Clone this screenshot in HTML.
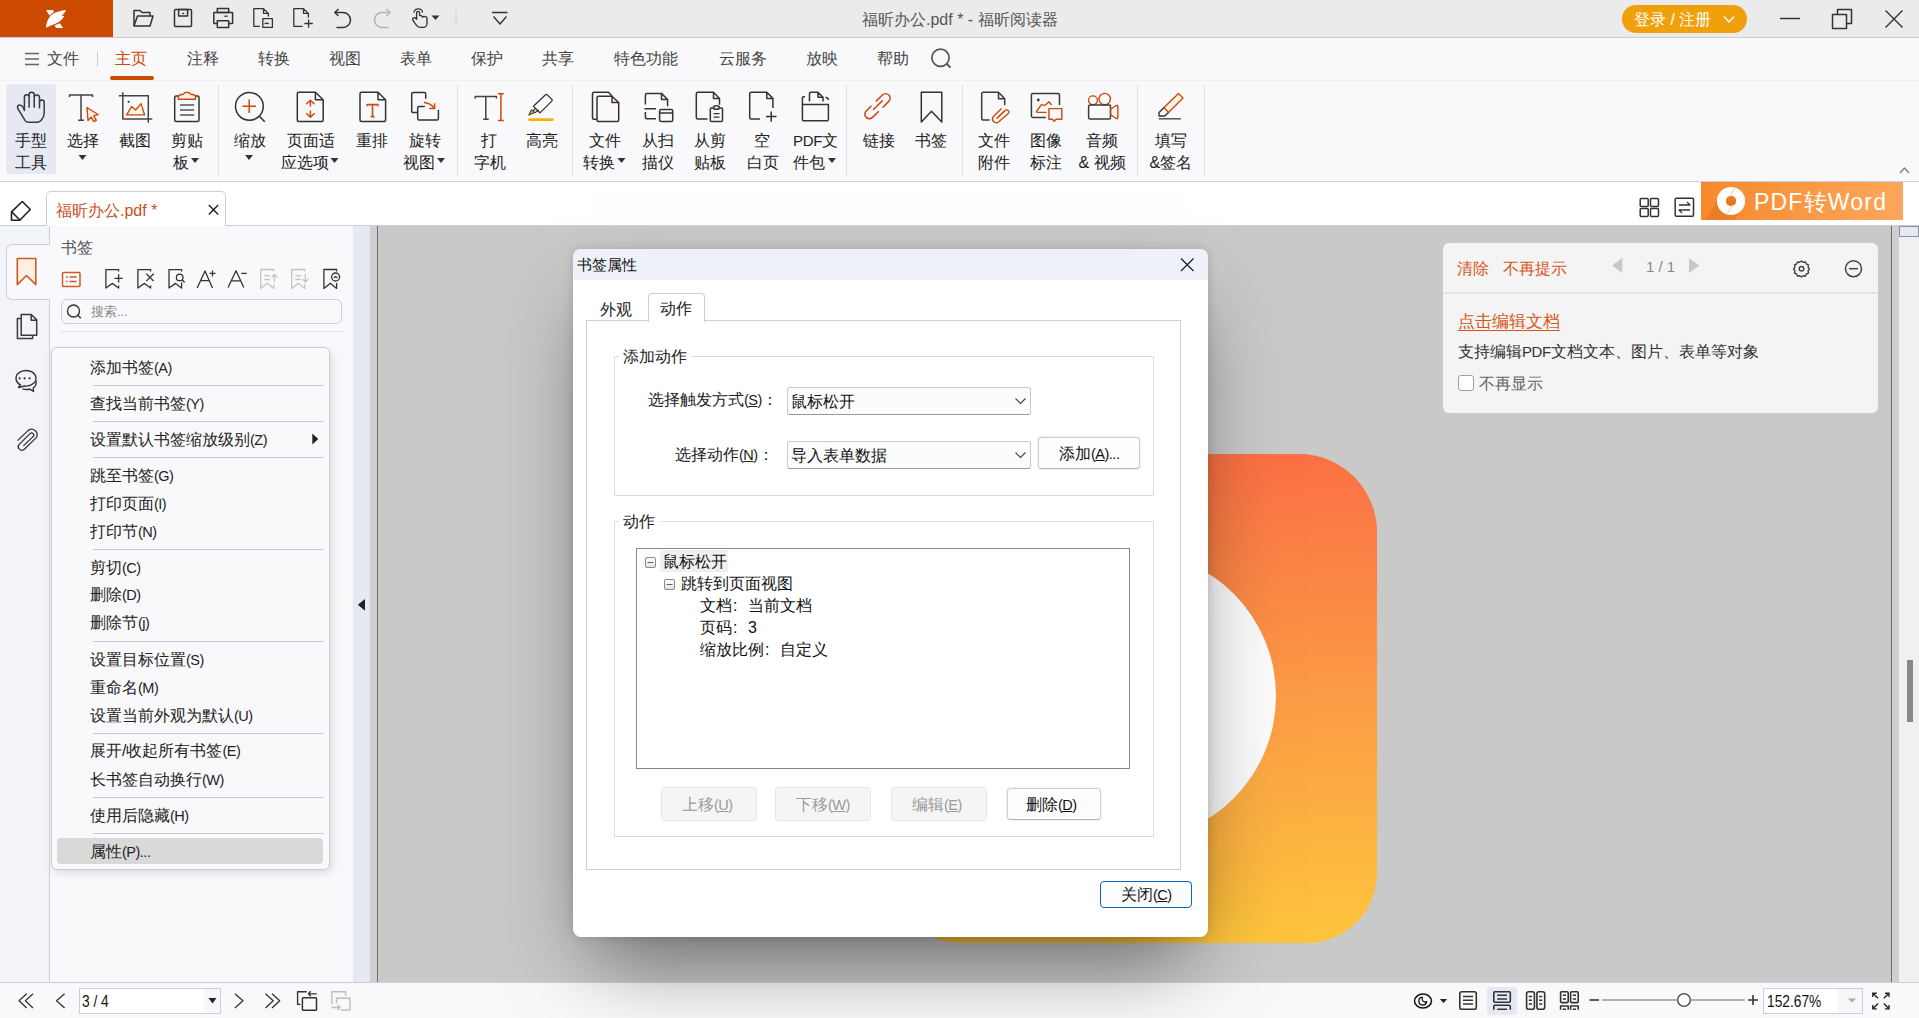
<!DOCTYPE html>
<html><head><meta charset="utf-8">
<style>
*{box-sizing:border-box;margin:0;padding:0}
html,body{width:1919px;height:1018px;overflow:hidden;background:#c9c9c9;font-family:"Liberation Sans",sans-serif;color:#333}
.a{position:absolute}
.t{position:absolute;white-space:nowrap;line-height:1}
svg{position:absolute;overflow:visible}
.lt{font-size:14.5px;letter-spacing:-0.5px}
</style></head><body>
<div class="a" style="left:0px;top:0px;width:1919px;height:37px;background:#ebebeb"></div>
<div class="a" style="left:0px;top:37px;width:1919px;height:1px;background:#c9cdd9"></div>
<div class="a" style="left:0px;top:0px;width:113px;height:37px;background:#cc4900"></div>
<div class="t" style="left:862px;top:12px;font-size:16px;color:#555;">福昕办公.pdf * - 福昕阅读器</div>
<div class="a" style="left:1622px;top:5px;width:125px;height:28px;border-radius:14px;background:#f0a00a"></div>
<div class="t" style="left:1634px;top:12px;font-size:16px;color:#fff;">登录 / 注册</div>
<svg width="1919" height="38" style="left:0;top:0" fill="none" stroke="#333" stroke-width="1.5" stroke-linejoin="round">
 <path d="M46,10 H53 L54,12 Q51,13.5 49.5,15.5 Z" fill="#fff" stroke="none"/>
 <path d="M46,28 C46.5,20 50,14 57,12 C60,11 63,10.5 66,10 C65,12.5 63.5,14.5 61.2,15.5 L64.2,16 C62.5,20 58,23 53,24.7 C50,25.7 48,26.5 46,28 Z" fill="#fff" stroke="none"/>
 <path d="M54.7,25.2 L60,23.2 L63,28 H56 Z" fill="#fff" stroke="none"/>
 <path d="M134,26 V10.5 H140 L142,12.5 H150 V16"/>
 <path d="M134,26 L137.5,16 H153 L150,26 Z"/>
 <rect x="174.5" y="9.5" width="17" height="17" rx="1"/>
 <rect x="178.6" y="9.5" width="9" height="6.6"/>
 <path d="M182.2,13.5 h2" stroke-width="1.4"/>
 <rect x="217.3" y="8.6" width="11.4" height="3.8"/>
 <rect x="213.8" y="12.4" width="18.8" height="11" rx="0.5"/>
 <rect x="217.3" y="20.8" width="11.4" height="6.6" fill="#ebebeb"/>
 <path d="M224.2,16.2 h3.6" stroke-width="1.2"/>
 <path d="M259.9,26.3 H253.8 V8.7 H263.5 L268.4,13.4 V16.4 M263.5,8.7 V13.4 H268.4" stroke-width="1.3"/>
 <rect x="262.8" y="18.7" width="9.6" height="8.6" stroke-width="1.3"/>
 <path d="M264.6,23.4 H268.8" stroke-width="1.4"/>
 <path d="M302.6,26.3 H293.8 V8.7 H303.5 L308.4,13.4 V17.5 M303.5,8.7 V13.4 H308.4" stroke-width="1.3"/>
 <path d="M304.4,23.5 H312.8 M308.6,19.5 V27.7" stroke-width="1.3"/>
 <path d="M338.5,9 L334.8,12.5 L338.5,16"/>
 <path d="M335.5,12.5 H343 A7.5,7.5 0 0 1 343,27.5 H336.5"/>
 <g stroke="#b4b4b4"><path d="M386.5,9 L390.2,12.5 L386.5,16"/>
 <path d="M389.5,12.5 H382 A7.5,7.5 0 0 0 382,27.5 H388.5"/></g>
  <path d="M416.6,19.3 V12.9 a1.5,1.5 0 0 1 3,0 V15.3 L421.6,15.8 L422.6,17.2 L423.8,16.4 L425.4,16.6 a1.6,1.6 0 0 1 1.6,1.6 V23.4 a4,4 0 0 1 -4,4 H420.3 a5,5 0 0 1 -4,-2.2 L412.8,20.2 a1.7,1.7 0 0 1 2.3,-2.3 Z" stroke-width="1.35"/>
 <path d="M413.9,12.6 A4.4,4.4 0 0 1 422.6,12.6" stroke-width="1.3"/>
<path d="M431.5,15.5 H439.5 L435.5,20 Z" fill="#333" stroke="none"/>
 <path d="M456,10 V26" stroke="#d0d0d0" stroke-width="1"/>
 <path d="M492,12.5 H507.5 M493.5,16.5 L500,24 L506.5,16.5" stroke-width="1.4"/>
 <path d="M1724,16.5 L1729,22 L1734,16.5" stroke="#fff" stroke-width="1.3"/>
 <path d="M1780,18.5 H1800" stroke-width="1.5"/>
 <rect x="1832.5" y="14.5" width="14" height="14"/>
 <path d="M1837.5,14.5 V9.5 H1851.5 V23.5 H1846.5"/>
 <path d="M1885.5,10.5 L1902.5,27.5 M1902.5,10.5 L1885.5,27.5" stroke-width="1.4"/>
</svg>
<div class="a" style="left:0px;top:38px;width:1919px;height:143px;background:#f9f9fb"></div>
<div class="a" style="left:0px;top:80px;width:1919px;height:1px;background:#eef0f4"></div>
<div class="t" style="left:47px;top:51px;font-size:16px;color:#444;">文件</div>
<div class="a" style="left:97px;top:51px;width:1px;height:16px;background:#d0d0d0"></div>
<div class="t" style="left:115px;top:51px;font-size:16px;color:#cc4a00;">主页</div>
<div class="a" style="left:110px;top:76px;width:44px;height:4px;border-radius:2px;background:#cc4a00"></div>
<div class="t" style="left:187px;top:51px;font-size:16px;color:#444;">注释</div>
<div class="t" style="left:258px;top:51px;font-size:16px;color:#444;">转换</div>
<div class="t" style="left:329px;top:51px;font-size:16px;color:#444;">视图</div>
<div class="t" style="left:400px;top:51px;font-size:16px;color:#444;">表单</div>
<div class="t" style="left:471px;top:51px;font-size:16px;color:#444;">保护</div>
<div class="t" style="left:542px;top:51px;font-size:16px;color:#444;">共享</div>
<div class="t" style="left:614px;top:51px;font-size:16px;color:#444;">特色功能</div>
<div class="t" style="left:719px;top:51px;font-size:16px;color:#444;">云服务</div>
<div class="t" style="left:806px;top:51px;font-size:16px;color:#444;">放映</div>
<div class="t" style="left:877px;top:51px;font-size:16px;color:#444;">帮助</div>
<svg width="1919" height="90" style="left:0;top:0" fill="none" stroke="#555" stroke-width="1.5">
 <path d="M25,53.5 H39 M25,59 H39 M25,64.5 H39" stroke="#666"/>
 <circle cx="940.5" cy="57.8" r="8.6" stroke="#555" stroke-width="1.7"/>
 <path d="M946.8,64 L950.5,67.7" stroke="#555" stroke-width="1.9"/>
</svg>
<div class="a" style="left:0px;top:181px;width:1919px;height:1px;background:#c8d0dc"></div>
<div class="a" style="left:6px;top:84px;width:50px;height:90px;border-radius:3px;background:#e6e9f1"></div>
<div class="t" style="left:15px;top:133px;font-size:16px;color:#222;">手型</div>
<div class="t" style="left:15px;top:155px;font-size:16px;color:#222;">工具</div>
<div class="t" style="left:67px;top:133px;font-size:16px;color:#222;">选择</div>
<div class="t" style="left:119px;top:133px;font-size:16px;color:#222;">截图</div>
<div class="t" style="left:171px;top:133px;font-size:16px;color:#222;">剪贴</div>
<div class="t" style="left:172.5px;top:155px;font-size:16px;color:#222;">板</div>
<div class="t" style="left:233.7px;top:133px;font-size:16px;color:#222;">缩放</div>
<div class="t" style="left:287px;top:133px;font-size:16px;color:#222;">页面适</div>
<div class="t" style="left:281px;top:155px;font-size:16px;color:#222;">应选项</div>
<div class="t" style="left:355.5px;top:133px;font-size:16px;color:#222;">重排</div>
<div class="t" style="left:408.7px;top:133px;font-size:16px;color:#222;">旋转</div>
<div class="t" style="left:402.5px;top:155px;font-size:16px;color:#222;">视图</div>
<div class="t" style="left:480.8px;top:133px;font-size:16px;color:#222;">打</div>
<div class="t" style="left:473.5px;top:155px;font-size:16px;color:#222;">字机</div>
<div class="t" style="left:525.6px;top:133px;font-size:16px;color:#222;">高亮</div>
<div class="t" style="left:589px;top:133px;font-size:16px;color:#222;">文件</div>
<div class="t" style="left:583px;top:155px;font-size:16px;color:#222;">转换</div>
<div class="t" style="left:641.7px;top:133px;font-size:16px;color:#222;">从扫</div>
<div class="t" style="left:641.7px;top:155px;font-size:16px;color:#222;">描仪</div>
<div class="t" style="left:693.7px;top:133px;font-size:16px;color:#222;">从剪</div>
<div class="t" style="left:693.7px;top:155px;font-size:16px;color:#222;">贴板</div>
<div class="t" style="left:753.7px;top:133px;font-size:16px;color:#222;">空</div>
<div class="t" style="left:747px;top:155px;font-size:16px;color:#222;">白页</div>
<div class="t" style="left:793px;top:133px;font-size:16px;color:#222;"><span style="font-size:15px;letter-spacing:-0.3px">PDF</span>文</div>
<div class="t" style="left:793px;top:155px;font-size:16px;color:#222;">件包</div>
<div class="t" style="left:863px;top:133px;font-size:16px;color:#222;">链接</div>
<div class="t" style="left:915px;top:133px;font-size:16px;color:#222;">书签</div>
<div class="t" style="left:977.5px;top:133px;font-size:16px;color:#222;">文件</div>
<div class="t" style="left:977.5px;top:155px;font-size:16px;color:#222;">附件</div>
<div class="t" style="left:1029.6px;top:133px;font-size:16px;color:#222;">图像</div>
<div class="t" style="left:1029.6px;top:155px;font-size:16px;color:#222;">标注</div>
<div class="t" style="left:1085.8px;top:133px;font-size:16px;color:#222;">音频</div>
<div class="t" style="left:1078.5px;top:155px;font-size:16px;color:#222;">&amp; 视频</div>
<div class="t" style="left:1155px;top:133px;font-size:16px;color:#222;">填写</div>
<div class="t" style="left:1149.4px;top:155px;font-size:16px;color:#222;">&amp;签名</div>
<svg width="1919" height="190" style="left:0;top:0" fill="none" stroke="#333" stroke-width="1.5" stroke-linejoin="round" stroke-linecap="butt">
<path d="M78.5,155 h8 l-4,5 z" fill="#333" stroke="none"/>
<path d="M191,158 h8 l-4,5 z" fill="#333" stroke="none"/>
<path d="M245,155 h8 l-4,5 z" fill="#333" stroke="none"/>
<path d="M330.5,158 h8 l-4,5 z" fill="#333" stroke="none"/>
<path d="M437,158 h8 l-4,5 z" fill="#333" stroke="none"/>
<path d="M617.5,158 h8 l-4,5 z" fill="#333" stroke="none"/>
<path d="M828,158 h8 l-4,5 z" fill="#333" stroke="none"/>
<path d="M218.5,85 V176" stroke="#dde2ea" stroke-width="1"/>
<path d="M457.5,85 V176" stroke="#dde2ea" stroke-width="1"/>
<path d="M572.5,85 V176" stroke="#dde2ea" stroke-width="1"/>
<path d="M846.5,85 V176" stroke="#dde2ea" stroke-width="1"/>
<path d="M962.5,85 V176" stroke="#dde2ea" stroke-width="1"/>
<path d="M1137.5,85 V176" stroke="#dde2ea" stroke-width="1"/>
<path d="M1204.5,85 V176" stroke="#dde2ea" stroke-width="1"/>

<path d="M24.4,110.5 V97.2 A2.35,2.35 0 0 1 29.1,97.2 V94.8 A2.55,2.55 0 0 1 34.2,94.8 V97.6 A2.65,2.65 0 0 1 39.5,97.6 V102.4 A2.35,2.35 0 0 1 44.2,102.4 V113 C44.2,117 41,122.3 37,122.3 H28.5 C27,122.3 25.8,121.5 25,120.3 L17.8,108.5 C16.8,106.5 18,105 19.8,105 C21.5,105 23.2,106.5 24.4,110.5 Z M29.1,97.2 V107.7 M34.2,97.6 V107.7 M39.5,102.4 V108.6" stroke="#3a3a3a"/>
<path d="M69.5,97 V95 H92.5 V97 M81,95 V120.3 M78,120.3 H84" stroke="#444"/>
<path d="M87,107.5 L98,114.5 L93.8,115.8 L96.3,120.3 L93.8,121.6 L91.3,117.1 L88,120.5 Z" stroke="#cc4a0a" fill="#fff3e6" stroke-width="1.4"/>
<path d="M122.8,92.3 V119.1 H152.3 M118.9,95.7 H148.3 V122.7" stroke="#444"/>
<circle cx="128.7" cy="101.8" r="1.1" fill="#444" stroke="none"/>
<path d="M126.7,114.9 L131.6,106.5 L135.6,110 L141,103.6 L144.6,114.9 Z" stroke="#cc4a0a" fill="#fff3e6" stroke-width="1.4"/>
<rect x="174.7" y="96" width="24.3" height="25.6" rx="1.5" stroke="#333"/>
<path d="M178.4,97.5 Q178.4,94.5 182,94.5 H183 Q184,92.3 187,92.3 Q190,92.3 191,94.5 H192 Q195.6,94.5 195.6,97.5 V99.3 H178.4 Z" stroke="#cc4a0a" fill="#fff3e6" stroke-width="1.4"/>
<path d="M180,105 H194.2 M180,110 H194.2 M180,115 H194.2" stroke="#555" stroke-width="1.6"/>
<circle cx="249.4" cy="106.3" r="13.9" stroke="#333"/>
<path d="M259.7,116.6 L264.7,121.7" stroke="#333"/>
<path d="M242.5,106.3 H256 M249.2,99.4 V112.9" stroke="#cc4a0a"/>
<path d="M297.3,120.1 V93.7 a1.5,1.5 0 0 1 1.5,-1.5 H315.4 L323.2,99.7 V120.1 a1.5,1.5 0 0 1 -1.5,1.5 H298.8 a1.5,1.5 0 0 1 -1.5,-1.5 Z M315.4,92.2 V99.7 H323.2" stroke="#333"/>
<path d="M310.4,100.5 V106.5 M306.2,104.3 L310.4,100.3 L314.6,104.3 M310.4,110.5 V117 M306.2,113.3 L310.4,117.3 L314.6,113.3" stroke="#cc4a0a"/>
<path d="M360,120.1 V93.7 a1.5,1.5 0 0 1 1.5,-1.5 H378 L385.6,99.7 V120.1 a1.5,1.5 0 0 1 -1.5,1.5 H361.5 a1.5,1.5 0 0 1 -1.5,-1.5 Z M378,92.2 V99.7 H385.6" stroke="#333"/>
<path d="M367.2,106.2 V104.6 H377.9 V106.2 M372.5,104.6 V116.6 M370.6,116.6 H374.6" stroke="#cc4a0a" stroke-width="1.6"/>
<path d="M418,112.6 H413 a1.3,1.3 0 0 1 -1.3,-1.3 V93.9 a1.3,1.3 0 0 1 1.3,-1.3 H424.4 a1.3,1.3 0 0 1 1.3,1.3 V98.8" stroke="#333"/>
<path d="M424.8,106.4 H419 a1.3,1.3 0 0 0 -1.3,1.3 V118.8 a1.3,1.3 0 0 0 1.3,1.3 H437.1 a1.3,1.3 0 0 0 1.3,-1.3 V109.9" stroke="#333"/>
<path d="M423.9,102.4 Q430.5,103 434.2,108" stroke="#cc4a0a"/>
<path d="M429.2,108.4 H434.6 V103.3" stroke="#cc4a0a"/>
<path d="M475.2,98.5 V96.6 H496.4 V98.5 M485.8,96.6 V119.2 M483.2,119.2 H488.7" stroke="#444"/>
<path d="M500.9,93.8 V120.4 M498,93.8 H503.8 M498,120.4 H503.8" stroke="#cc4a0a"/>
<path d="M545.5,94.8 a1.2,1.2 0 0 1 1.7,0 L551.8,99.4 a1.2,1.2 0 0 1 0,1.7 L540,112.9 L533.4,106.3 Z M533.4,106.3 L535.5,108.4 L531.8,112.4 L535.5,112.4 L537.8,110.2 L540,112.9" stroke="#333" stroke-width="1.3"/>
<path d="M531.5,109.5 L528.8,115.2 L534.5,112.6 Z" fill="#f0a000" stroke="#333" stroke-width="1"/>
<path d="M529.5,119.6 H552.5" stroke="#f5b30a" stroke-width="2.6" stroke-linecap="round"/>
<path d="M596.8,119.2 H594 a1.5,1.5 0 0 1 -1.5,-1.5 V93.7 a1.5,1.5 0 0 1 1.5,-1.5 H608.5 L612,96" stroke="#3a3030"/>
<path d="M597,120.1 V97.7 a1.5,1.5 0 0 1 1.5,-1.5 H612 L618.7,102.5 V120.1 a1.5,1.5 0 0 1 -1.5,1.5 H598.5 a1.5,1.5 0 0 1 -1.5,-1.5 Z M612,96.2 V102.5 H618.7" stroke="#3a3030"/>
<path d="M645.4,104.5 V94.9 a1.5,1.5 0 0 1 1.5,-1.5 H661.5 L667.6,99.5 V106.2 M661.5,93.4 V99.5 H667.6 M644.5,108.8 H656 M645.4,112 V117.3 a1.5,1.5 0 0 0 1.5,1.5 H656" stroke="#3a3030"/>
<rect x="659.6" y="109.5" width="13.1" height="12.1" rx="1.5" stroke="#3a3030"/>
<path d="M659.6,113 H672.7" stroke="#3a3030"/>
<path d="M707.5,119 H697.8 a1.5,1.5 0 0 1 -1.5,-1.5 V93.7 a1.5,1.5 0 0 1 1.5,-1.5 H713.5 L719.5,98.4 V104.8 M713.5,92.2 V98.4 H719.5" stroke="#3a3030"/>
<rect x="710.3" y="108" width="12.2" height="13.6" rx="1.3" stroke="#3a3030"/>
<ellipse cx="716.4" cy="107.5" rx="3" ry="1.8" stroke="#3a3030" fill="#f9f9fb"/>
<path d="M713.5,113.6 H719.5 M713.5,117.2 H719.5" stroke="#3a3030" stroke-width="1.3"/>
<path d="M760,119 H751.2 a1.5,1.5 0 0 1 -1.5,-1.5 V93.7 a1.5,1.5 0 0 1 1.5,-1.5 H766.8 L772.9,98.4 V108 M766.8,92.2 V98.4 H772.9" stroke="#3a3030"/>
<path d="M766,116.6 H776.5 M771.2,111.5 V121.8" stroke="#3a3030"/>
<path d="M802.4,104.5 H828.4 V119.3 a1.5,1.5 0 0 1 -1.5,1.5 H803.9 a1.5,1.5 0 0 1 -1.5,-1.5 Z M802.4,104.5 V98 a1.3,1.3 0 0 1 1.3,-1.3 H805 M809.5,101.5 V93.8 a1.5,1.5 0 0 1 1.5,-1.5 H818 L823,97.3 V101.5 M818,92.3 V97.3 H823 M825.5,97.5 a2.5,2.5 0 0 1 2.9,2.5" stroke="#3a3030"/>
<path d="M876.3,101 L882.4,95 A4.5,4.5 0 0 1 888.8,101.4 L883,107.2 M873.5,109.5 L882.3,100.7 M871,106.2 L866.2,111 A4.5,4.5 0 0 0 872.6,117.4 L878.3,111.7" stroke="#cc4a0a" stroke-width="1.6" stroke-linecap="round"/>
<path d="M921.3,92.2 H941.8 V121.9 L931.5,111.2 L921.3,121.9 Z" stroke="#333"/>
<path d="M989.6,120.1 H983.2 a1.5,1.5 0 0 1 -1.5,-1.5 V93.7 a1.5,1.5 0 0 1 1.5,-1.5 H998.5 L1004.7,98.8 V105.3 M998.5,92.2 V98.8 H1004.7" stroke="#3a3a3a"/>
<path d="M996.5,118.8 L1005.5,110.2 a2.2,2.2 0 0 1 3,3 L998.5,122 a3.8,3.8 0 0 1 -5.3,-5.3 L1001.5,108.5 M997.8,117.2 L1004,111.3" stroke="#cc4a0a" stroke-width="1.4"/>
<path d="M1045.8,117.4 H1032.9 a1.5,1.5 0 0 1 -1.5,-1.5 V95 a1.5,1.5 0 0 1 1.5,-1.5 H1058 a1.5,1.5 0 0 1 1.5,1.5 V105" stroke="#3a3a3a"/>
<circle cx="1038.3" cy="100" r="1.4" fill="#3a3a3a" stroke="none"/>
<path d="M1046.7,112.4 H1037.5 Q1036,112.4 1036.8,111 L1041.4,104.6 L1045,105.4 L1048.9,101.8 L1051.6,105" stroke="#cc4a0a" stroke-width="1.4"/>
<path d="M1048.9,108.6 H1061.8 V119.2 H1056 L1054.2,121.2 L1052.4,119.2 H1048.9 Z" stroke="#cc4a0a" stroke-width="1.4"/>
<circle cx="1093" cy="100.3" r="4.4" stroke="#cc4a0a" stroke-width="1.4"/>
<circle cx="1104.7" cy="99.1" r="5.7" stroke="#cc4a0a" stroke-width="1.4"/>
<rect x="1088.6" y="105" width="21.9" height="14" rx="1.5" stroke="#3a3a3a"/>
<path d="M1110.5,109.5 L1116.5,105.3 a1,1 0 0 1 1.3,0.9 V117.8 a1,1 0 0 1 -1.3,0.9 L1110.5,114.5 Z" stroke="#cc4a0a" stroke-width="1.4"/>
<path d="M1164,107.5 L1178.5,93.5 L1183,98 L1168.5,112.5 Z" stroke="#cc4a0a" fill="#fff3e6" stroke-width="1.4"/>
<path d="M1164,107.5 L1159,112.5 V116 H1164.8 L1168.5,112.5" stroke="#333" stroke-width="1.4"/>
<path d="M1158.7,118.8 H1180.9" stroke="#555" stroke-width="1.5"/>
</svg>
<div class="a" style="left:0px;top:182px;width:1919px;height:43px;background:#fff"></div>
<div class="a" style="left:0px;top:225px;width:1919px;height:1px;background:#c8d0dc"></div>
<div class="a" style="left:0px;top:226px;width:49px;height:756px;background:#f3f4f8"></div>
<div class="a" style="left:49px;top:226px;width:1px;height:756px;background:#c8d0dc"></div>
<div class="a" style="left:50px;top:226px;width:303px;height:756px;background:#f9f9fb"></div>
<div class="a" style="left:353px;top:226px;width:17px;height:756px;background:#e6e9f1"></div>
<div class="a" style="left:370px;top:226px;width:7px;height:756px;background:#cfcfcf"></div>
<div class="a" style="left:377px;top:226px;width:1px;height:756px;background:#6e6e6e"></div>
<div class="a" style="left:1891px;top:226px;width:1px;height:756px;background:#6e6e6e"></div>
<div class="a" style="left:1892px;top:226px;width:7px;height:756px;background:#cfcfcf"></div>
<div class="a" style="left:1899px;top:226px;width:20px;height:756px;background:#f0f0f0"></div>
<svg width="1919" height="240" style="left:0;top:0" fill="none" stroke="#222" stroke-width="1.5" stroke-linejoin="round">
<path d="M11.5,220.3 V211.8 L22.3,201.5 L30.3,209.5 L19.8,220.3 Z M12,212 L19.8,220" stroke-width="1.6"/>
<path d="M208.8,205 L218.2,214.5 M218.2,205 L208.8,214.5" stroke-width="1.4"/>
<rect x="1640.2" y="198.5" width="8" height="8" rx="1" stroke="#333"/>
<rect x="1650.5" y="198.5" width="8" height="8" rx="1" stroke="#333"/>
<rect x="1640.2" y="208.5" width="8" height="8" rx="1" stroke="#333"/>
<rect x="1650.5" y="208.5" width="8" height="8" rx="1" stroke="#333"/>
<rect x="1675.2" y="198.2" width="18.3" height="18" rx="1" stroke="#333"/>
<path d="M1679,205 H1690 L1687,202 M1690,210 H1679 L1682,213" stroke="#333" stroke-width="1.3"/>
<path d="M1900,173 L1904.5,168 L1909,173" stroke="#888" stroke-width="1.6"/>
</svg>
<div class="a" style="left:46px;top:191px;width:180px;height:35px;background:#fff;border:1px solid #c8d0dc;border-bottom:none;border-radius:5px 5px 0 0"></div>
<div class="a" style="left:47px;top:224px;width:178px;height:2px;background:#fff"></div>
<div class="t" style="left:56px;top:203px;font-size:16px;color:#c9501c;">福昕办公.pdf *</div>
<div class="a" style="left:1701px;top:182px;width:202px;height:38px;background:linear-gradient(90deg,#f7892c,#fba75c)"></div>
<svg width="1919" height="240" style="left:0;top:0">
<path d="M1705,220 L1719,197 L1740,212 L1734,220 Z" fill="#e07220" opacity="0.55"/>
<circle cx="1731" cy="201" r="9.6" fill="none" stroke="#fff" stroke-width="9"/>
<circle cx="1731" cy="201" r="5" fill="#e57a22"/>
<path d="M1735.5,187.5 L1729.5,196.5 M1732.5,205.5 L1726.5,214.5" stroke="#fbd2a8" stroke-width="1.2"/>
</svg><div class="t" style="left:1754px;top:191px;font-size:23px;color:#fff;letter-spacing:1.2px">PDF转Word</div>
<div class="a" style="left:6px;top:244px;width:44px;height:56px;background:#f9f9fb;border:1px solid #c8d0dc;border-right:none;border-radius:6px 0 0 6px"></div>
<svg width="400" height="1018" style="left:0;top:0" fill="none" stroke="#333" stroke-width="1.5" stroke-linejoin="round">
<path d="M17.3,258.5 H35.8 V284.6 L26.5,275.5 L17.3,284.6 Z" stroke="#d05a20" fill="#fff0e4" stroke-width="1.6"/>
<path d="M32.6,335.3 V338.5 H17.4 V318.4 H21.2" stroke="#3a3a3a"/>
<path d="M21.2,314.6 H31.2 L36.7,319.8 V335.3 H21.2 Z M31.2,314.6 V320.3 H36.7" stroke="#3a3a3a"/>
<path d="M18.5,387.5 L20.5,384.8 A10,7.8 0 1 1 24.5,386 Z" stroke="#333" stroke-width="1.4"/>
<circle cx="19.6" cy="378.3" r="1.1" fill="#333" stroke="none"/>
<circle cx="24.6" cy="378.3" r="1.1" fill="#333" stroke="none"/>
<circle cx="29.6" cy="378.3" r="1.1" fill="#333" stroke="none"/>
<path d="M35.8,380.5 Q37,385.5 33.2,388 L33.5,391.5 L30,389.2 Q26,390 22.5,388.8" stroke="#333" stroke-width="1.4"/>
<path d="M17.5,440.6 L28.3,430.4 A5.5,5.5 0 0 1 36.3,437.6 L24.3,449.3 A3.6,3.6 0 0 1 18.9,444.6 L30.1,433.6 A2.05,2.05 0 0 1 33.1,436.6 L23.4,445.9" stroke="#333" stroke-width="1.3"/>
</svg><div class="t" style="left:61px;top:240px;font-size:16px;color:#555;">书签</div>
<svg width="400" height="1018" style="left:0;top:0" fill="none" stroke="#333" stroke-width="1.4" stroke-linejoin="round">
<rect x="62.5" y="272.5" width="17.5" height="14" rx="1" stroke="#d05a20" stroke-width="1.5"/>
<path d="M66,277 h1.5 M66,281.5 h1.5 M69.5,277 H76.5 M69.5,281.5 H76.5" stroke="#d05a20" stroke-width="1.5"/>
<g stroke-width="1.3">
<path d="M118.6,271.5 V269.6 H105.9 V288 L112.5,283.4 L118.6,288 V285.6"/>
<path d="M114.4,278.3 H122.8 M118.6,274.3 V282.4"/>
<path d="M150.6,271.5 V269.6 H137.9 V288 L144.5,283.4 L150.6,288 V285.6"/>
<path d="M146.3,273.7 L153.7,281.1 M153.7,273.7 L146.3,281.1"/>
<path d="M181.6,271.5 V269.6 H169 V288 L175.5,283.4 L181.6,288 V282.5"/>
<circle cx="179.7" cy="277.4" r="3.3"/><path d="M182.1,279.8 L184.6,282.5"/>
<path d="M197.2,288 L205,270.9 L212.5,288 M200.8,280.6 H209.2"/>
<path d="M209.5,273.4 H215.5 M212.5,270.4 V276.4"/>
<path d="M228.1,287.5 L236,270.8 L243.8,287.5 M231.6,280.8 H240.3"/>
<path d="M241.2,273.4 H246.7"/>
<g stroke="#c4c4c4"><path d="M273.7,271.5 V269.5 H260.7 V288.4 L267.2,283.2 L273.7,288.4 V284.2 M264.3,275.7 H269.8 M264.3,279.5 H269.8 M274.4,274.4 V282.2 M271.6,277.2 L274.4,274.4 L277.2,277.2"/></g>
<g stroke="#c4c4c4"><path d="M304.7,271.5 V269.5 H291.7 V288.4 L298.2,283.2 L304.7,288.4 V284.2 M295.3,275.7 H300.8 M295.3,279.5 H300.8 M305.3,274 V282 M302.5,279.2 L305.3,282 L308.1,279.2"/></g>
<path d="M336.6,271.5 V269.5 H323.9 V288.4 L330.3,283.2 L336.6,288.4 V283"/>
<circle cx="335.6" cy="277" r="4"/><path d="M333.9,278 L335.6,276.3 L337.3,278" stroke-width="1.1"/>
</g>
<circle cx="73.5" cy="311" r="6" /><path d="M77.8,315.3 L80.8,318.3"/>
</svg><div class="a" style="left:61px;top:299px;width:281px;height:25px;border:1px solid #c8d0dc;border-radius:6px"></div>
<div class="t" style="left:91px;top:305px;font-size:13px;color:#888;">搜索...</div>
<div class="a" style="left:60px;top:331px;width:284px;height:1px;background:#e3e6ec"></div>
<svg width="400" height="1018" style="left:0;top:0"><path d="M365,599 V610.7 L357.8,604.8 Z" fill="#222"/></svg><div class="a" style="left:889px;top:454px;width:488px;height:489px;border-radius:72px 78px 70px 72px;background:linear-gradient(180deg,#fc7044 0%,#fb8a45 30%,#fca444 60%,#fec53c 100%);overflow:hidden">
<div class="a" style="left:97px;top:97px;width:290px;height:290px;border-radius:50%;background:radial-gradient(circle at 50% 50%,#ffffff 0%,#fbfbfb 80%,#f3f3f3 97%,#f6d0a0 100%)"></div>
</div><div class="a" style="left:1443px;top:243px;width:435px;height:170px;background:#f4f4f4;border-radius:6px"></div>
<div class="a" style="left:1443px;top:292px;width:435px;height:2px;background:#e4e4e4"></div>
<div class="t" style="left:1457px;top:261px;font-size:16px;color:#d5561b;">清除</div>
<div class="t" style="left:1503px;top:261px;font-size:16px;color:#d5561b;">不再提示</div>
<div class="t" style="left:1646px;top:259px;font-size:15px;color:#888;">1 / 1</div>
<div class="t" style="left:1458px;top:313px;font-size:17px;color:#d5561b;text-decoration:underline;text-underline-offset:3px">点击编辑文档</div>
<div class="t" style="left:1458px;top:344px;font-size:16px;color:#333;">支持编辑<span style="font-size:15px;letter-spacing:-0.4px">PDF</span>文档文本、图片、表单等对象</div>
<div class="a" style="left:1458px;top:375px;width:16px;height:16px;background:#fff;border:1px solid #9aa0ae;border-radius:3px"></div>
<div class="t" style="left:1479px;top:376px;font-size:16px;color:#666;">不再显示</div>
<svg width="1919" height="1018" style="left:0;top:0" fill="none" stroke="#444" stroke-width="1.5">
<path d="M1622.3,258 V273 L1612,265.5 Z" fill="#c8c8c8" stroke="none"/>
<path d="M1689,258 V273 L1699.5,265.5 Z" fill="#c8c8c8" stroke="none"/>
<circle cx="1801.5" cy="268.7" r="2.3"/>
<path d="M1801.5,261 l1.8,1.3 2.2,-0.3 0.9,2 2,1 -0.3,2.2 1.3,1.8 -1.3,1.8 0.3,2.2 -2,1 -0.9,2 -2.2,-0.3 -1.8,1.3 -1.8,-1.3 -2.2,0.3 -0.9,-2 -2,-1 0.3,-2.2 -1.3,-1.8 1.3,-1.8 -0.3,-2.2 2,-1 0.9,-2 2.2,0.3 z" stroke-width="1.4"/>
<circle cx="1853.5" cy="268.7" r="8" stroke-width="1.5"/>
<path d="M1849,268.7 H1858"/>
</svg><div class="a" style="left:1899px;top:226px;width:20px;height:11px;background:#e6e9f1;border:1px solid #8a90a8"></div>
<div class="a" style="left:1907px;top:660px;width:6px;height:62px;background:#888"></div>
<div class="a" style="left:0px;top:982px;width:1919px;height:1px;background:#c8d0dc"></div>
<div class="a" style="left:0px;top:983px;width:1919px;height:35px;background:#f9f9fb"></div>
<div class="a" style="left:79px;top:988px;width:142px;height:26px;background:#fff;border:1px solid #c8d0dc"></div>
<div class="a" style="left:204px;top:989px;width:16px;height:24px;background:#f7f7f9"></div>
<div class="t" style="left:82px;top:994px;font-size:16px;color:#111;transform:scaleX(0.86);transform-origin:0 0">3 / 4</div>
<div class="a" style="left:1487px;top:987px;width:30px;height:28px;background:#e6e9f1;border-radius:3px"></div>
<div class="a" style="left:1763px;top:988px;width:100px;height:26px;background:#fff;border:1px solid #c8d0dc"></div>
<div class="a" style="left:1838px;top:989px;width:24px;height:24px;background:#f7f7f9"></div>
<div class="t" style="left:1767px;top:994px;font-size:16px;color:#111;transform:scaleX(0.86);transform-origin:0 0">152.67%</div>
<svg width="1919" height="1018" style="left:0;top:0" fill="none" stroke="#333" stroke-width="1.4" stroke-linejoin="round">
<path d="M26.7,993.8 L19,1000.8 L26.7,1007.9 M33,993.8 L25.4,1000.8 L33,1007.9" stroke-width="1.3"/>
<path d="M64.6,993.8 L56.5,1000.8 L64.6,1007.9" stroke-width="1.3"/>
<path d="M208.5,998 H216.5 L212.5,1003.5 Z" fill="#222" stroke="none"/>
<path d="M234.9,993.8 L243,1000.8 L234.9,1007.9" stroke-width="1.3"/>
<path d="M265.5,993.8 L273.2,1000.8 L265.5,1007.9 M272,993.8 L279.7,1000.8 L272,1007.9" stroke-width="1.3"/>
<path d="M306.7,991.8 H297.6 V1004.4 H300.4" stroke-width="1.4"/><rect x="302.4" y="997.8" width="14.1" height="12.4" rx="0.8" stroke-width="1.5"/><path d="M308.3,993.8 H316.7 M308.3,993.8 L310.8,991.3 M308.3,993.8 L310.8,996.3" stroke-width="1.3"/>
<g stroke="#bdbdbd" stroke-width="1.4"><path d="M331.8,1004.2 V991.8 H345.5 V995.4"/><path d="M340.8,1010 H350 V998.3 H336.6 V1003"/><path d="M331.5,1007.5 H340 M337.6,1005 L340,1007.5 L337.6,1010"/></g>
<ellipse cx="1423" cy="1001" rx="8.5" ry="7" stroke="#111" stroke-width="1.5"/>
<path d="M1422.4,997.2 A3.9,3.9 0 1 0 1426.6,1001.6 A3.2,3.2 0 0 1 1422.4,997.2 Z" stroke="#111" stroke-width="1.3"/>
<path d="M1439.8,999 H1447.2 L1443.5,1003 Z" fill="#222" stroke="none"/>
<g stroke="#333" stroke-width="1.6">
<rect x="1459.8" y="991.8" width="16.5" height="17.5" rx="2"/>
<path d="M1463,996.5 H1473 M1463,1000.3 H1473 M1463,1004 H1473"/>
<rect x="1493.8" y="991.8" width="16.5" height="10.5" rx="1"/>
<path d="M1497.2,995.3 H1507 M1497.2,999 H1507 M1493.8,1009.8 V1006.3 a1,1 0 0 1 1,-1 H1509.3 a1,1 0 0 1 1,1 V1009.8 M1497.2,1009.3 H1507"/>
<rect x="1526.6" y="991.8" width="7.8" height="17.5" rx="2"/>
<rect x="1536.9" y="991.8" width="7.8" height="17.5" rx="2"/>
<path d="M1528.8,996.5 h3.2 M1528.8,1000.3 h3.2 M1528.8,1004 h3.2 M1539.1,996.5 h3.2 M1539.1,1000.3 h3.2 M1539.1,1004 h3.2"/>
<rect x="1560.6" y="991.8" width="7.6" height="10.8" rx="1"/>
<rect x="1570.6" y="991.8" width="7.6" height="10.8" rx="1"/>
<path d="M1562.8,995.3 h3.2 M1562.8,999 h3.2 M1572.8,995.3 h3.2 M1572.8,999 h3.2"/>
<path d="M1560.6,1009.8 V1006 H1568.2 V1009.8 M1570.6,1009.8 V1006 H1578.2 V1009.8 M1562.8,1009.2 h3.2 M1572.8,1009.2 h3.2"/>
</g>
<path d="M1589.5,1000 H1599" stroke-width="1.6"/>
<path d="M1602,1000 H1745" stroke="#9a9a9a" stroke-width="1.5"/>
<circle cx="1684" cy="1000" r="6.3" fill="#fff" stroke="#444" stroke-width="1.3"/>
<path d="M1748,1000 H1758 M1753,995 V1005" stroke-width="1.6"/>
<path d="M1847.8,998.5 H1856 L1851.9,1002.5 Z" fill="#aaa" stroke="none"/>
<path d="M1876.8,993.2 H1872.8 V997 M1872.8,993.2 L1878,998.3 M1885,993.2 H1889 V997 M1889,993.2 L1883.8,998.3 M1876.8,1008.8 H1872.8 V1005 M1872.8,1008.8 L1878,1003.6 M1885,1008.8 H1889 V1005 M1889,1008.8 L1883.8,1003.6" stroke="#222" stroke-width="1.35" stroke-linejoin="miter"/>
</svg><svg width="300" height="240" style="left:0;top:0" fill="none" stroke="#222"><path d="M208.8,205 L218.2,214.5 M218.2,205 L208.8,214.5" stroke-width="1.4"/></svg><div class="a" style="left:51px;top:347px;width:279px;height:523px;background:#f9f9fb;border:1px solid #c9ccd6;border-radius:6px;box-shadow:2px 3px 8px rgba(0,0,0,0.12)"></div>
<div class="a" style="left:57px;top:838px;width:266px;height:26px;background:#d9d9d9;border-radius:4px"></div>
<div class="t" style="left:90px;top:360px;font-size:16px;color:#222;">添加书签<span class="lt">(A)</span></div>
<div class="a" style="left:93px;top:385px;width:231px;height:1px;background:#c8cdd8"></div>
<div class="t" style="left:90px;top:396px;font-size:16px;color:#222;">查找当前书签<span class="lt">(Y)</span></div>
<div class="a" style="left:93px;top:421px;width:231px;height:1px;background:#c8cdd8"></div>
<div class="t" style="left:90px;top:432px;font-size:16px;color:#222;">设置默认书签缩放级别<span class="lt">(Z)</span></div>
<div class="a" style="left:93px;top:457px;width:231px;height:1px;background:#c8cdd8"></div>
<div class="t" style="left:90px;top:468px;font-size:16px;color:#222;">跳至书签<span class="lt">(G)</span></div>
<div class="t" style="left:90px;top:496px;font-size:16px;color:#222;">打印页面<span class="lt">(I)</span></div>
<div class="t" style="left:90px;top:524px;font-size:16px;color:#222;">打印节<span class="lt">(N)</span></div>
<div class="a" style="left:93px;top:549px;width:231px;height:1px;background:#c8cdd8"></div>
<div class="t" style="left:90px;top:560px;font-size:16px;color:#222;">剪切<span class="lt">(C)</span></div>
<div class="t" style="left:90px;top:587px;font-size:16px;color:#222;">删除<span class="lt">(D)</span></div>
<div class="t" style="left:90px;top:615px;font-size:16px;color:#222;">删除节<span class="lt">(j)</span></div>
<div class="a" style="left:93px;top:641px;width:231px;height:1px;background:#c8cdd8"></div>
<div class="t" style="left:90px;top:652px;font-size:16px;color:#222;">设置目标位置<span class="lt">(S)</span></div>
<div class="t" style="left:90px;top:680px;font-size:16px;color:#222;">重命名<span class="lt">(M)</span></div>
<div class="t" style="left:90px;top:708px;font-size:16px;color:#222;">设置当前外观为默认<span class="lt">(U)</span></div>
<div class="a" style="left:93px;top:733px;width:231px;height:1px;background:#c8cdd8"></div>
<div class="t" style="left:90px;top:743px;font-size:16px;color:#222;">展开/收起所有书签<span class="lt">(E)</span></div>
<div class="t" style="left:90px;top:772px;font-size:16px;color:#222;">长书签自动换行<span class="lt">(W)</span></div>
<div class="a" style="left:93px;top:797px;width:231px;height:1px;background:#c8cdd8"></div>
<div class="t" style="left:90px;top:808px;font-size:16px;color:#222;">使用后隐藏<span class="lt">(H)</span></div>
<div class="a" style="left:93px;top:833px;width:231px;height:1px;background:#c8cdd8"></div>
<div class="t" style="left:90px;top:844px;font-size:16px;color:#222;">属性<span class="lt">(P)...</span></div>
<svg width="400" height="1018" style="left:0;top:0"><path d="M312.3,433.5 V444.5 L318.3,439 Z" fill="#222"/></svg><div class="a" style="left:573px;top:249px;width:635px;height:688px;background:#fff;border-radius:8px;box-shadow:0 40px 80px -20px rgba(0,0,0,0.5),0 0 10px rgba(0,0,0,0.15);overflow:hidden"><div class="a" style="left:0;top:0;width:635px;height:31px;background:#eef2f8"></div></div>
<div class="t" style="left:577px;top:257px;font-size:15px;color:#111;">书签属性</div>
<svg width="1919" height="1018" style="left:0;top:0" fill="none" stroke="#222"><path d="M1181,258.5 L1193.5,271 M1193.5,258.5 L1181,271" stroke-width="1.3"/></svg><div class="a" style="left:586px;top:320px;width:595px;height:550px;border:1px solid #c9cfdc"></div>
<div class="a" style="left:648px;top:293px;width:57px;height:29px;background:#fff;border:1px solid #c9cfdc;border-bottom:none;border-radius:4px 4px 0 0"></div>
<div class="t" style="left:600px;top:302px;font-size:16px;color:#222;">外观</div>
<div class="t" style="left:660px;top:301px;font-size:16px;color:#222;">动作</div>
<div class="a" style="left:614px;top:356px;width:540px;height:140px;border:1px solid #dcdcdc"></div>
<div class="a" style="left:619px;top:349px;width:72px;height:16px;background:#fff"></div>
<div class="t" style="left:623px;top:349px;font-size:16px;color:#222;">添加动作</div>
<div class="t" style="left:648px;top:392px;font-size:16px;color:#222;">选择触发方式<span class="lt">(<u>S</u>)</span>：</div>
<div class="t" style="left:675px;top:447px;font-size:16px;color:#222;">选择动作<span class="lt">(<u>N</u>)</span>：</div>
<div class="a" style="left:787px;top:387px;width:244px;height:28px;background:#fcfcfc;border:1px solid #c9c9c9;border-bottom-color:#9a9a9a;border-radius:3px"></div>
<div class="t" style="left:791px;top:394px;font-size:16px;color:#111;">鼠标松开</div>
<div class="a" style="left:787px;top:441px;width:244px;height:28px;background:#fcfcfc;border:1px solid #c9c9c9;border-bottom-color:#9a9a9a;border-radius:3px"></div>
<div class="t" style="left:791px;top:448px;font-size:16px;color:#111;">导入表单数据</div>
<svg width="1919" height="1018" style="left:0;top:0" fill="none" stroke="#444" stroke-width="1.1"><path d="M1015.5,398.5 L1020.5,403.5 L1025.5,398.5 M1015.5,452.5 L1020.5,457.5 L1025.5,452.5"/></svg><div class="a" style="left:1037px;top:436px;width:104px;height:34px;background:#f0f0f0;border-radius:4px"></div>
<div class="a" style="left:1038px;top:437px;width:102px;height:32px;background:#fdfdfd;border:1px solid #cfcfcf;border-bottom-color:#b5b5b5;border-radius:4px"></div>
<div class="t" style="left:1059px;top:446px;font-size:16px;color:#111;">添加<span class="lt">(<u>A</u>)...</span></div>
<div class="a" style="left:614px;top:521px;width:540px;height:316px;border:1px solid #dcdcdc"></div>
<div class="a" style="left:619px;top:514px;width:42px;height:16px;background:#fff"></div>
<div class="t" style="left:623px;top:514px;font-size:16px;color:#222;">动作</div>
<div class="a" style="left:636px;top:548px;width:494px;height:221px;border:1px solid #828790"></div>
<div class="a" style="left:660px;top:550px;width:68px;height:22px;background:#efefef"></div>
<div class="t" style="left:663px;top:554px;font-size:16px;color:#111;">鼠标松开</div>
<div class="t" style="left:681px;top:576px;font-size:16px;color:#111;">跳转到页面视图</div>
<div class="t" style="left:700px;top:598px;font-size:16px;color:#111;">文档<span style="display:inline-block;width:16px;padding-left:1px">:</span>当前文档</div>
<div class="t" style="left:700px;top:620px;font-size:16px;color:#111;">页码<span style="display:inline-block;width:16px;padding-left:1px">:</span>3</div>
<div class="t" style="left:700px;top:642px;font-size:16px;color:#111;">缩放比例<span style="display:inline-block;width:16px;padding-left:1px">:</span>自定义</div>
<svg width="1919" height="1018" style="left:0;top:0" fill="none" stroke="#8a8a8a" stroke-width="1"><defs><linearGradient id="tg" x1="0" y1="0" x2="0" y2="1"><stop offset="0" stop-color="#fdfdfd"/><stop offset="0.5" stop-color="#f4f4f4"/><stop offset="1" stop-color="#dedede"/></linearGradient></defs><rect x="645.5" y="557.5" width="10" height="10" rx="1.5" fill="url(#tg)"/><path d="M647.5,562.5 H653.5" stroke="#4a5aa8"/><rect x="664.5" y="579.5" width="10" height="10" rx="1.5" fill="url(#tg)"/><path d="M666.5,584.5 H672.5" stroke="#4a5aa8"/></svg><div class="a" style="left:661px;top:787px;width:96px;height:34px;background:#f5f5f5;border:1px solid #e6e6e6;border-radius:3px"></div>
<div class="t" style="left:682px;top:797px;font-size:16px;color:#9a9a9a;">上移<span class="lt">(<u>U</u>)</span></div>
<div class="a" style="left:775px;top:787px;width:96px;height:34px;background:#f5f5f5;border:1px solid #e6e6e6;border-radius:3px"></div>
<div class="t" style="left:796px;top:797px;font-size:16px;color:#9a9a9a;">下移<span class="lt">(<u>W</u>)</span></div>
<div class="a" style="left:891px;top:787px;width:96px;height:34px;background:#f5f5f5;border:1px solid #e6e6e6;border-radius:3px"></div>
<div class="t" style="left:912px;top:797px;font-size:16px;color:#9a9a9a;">编辑<span class="lt">(<u>E</u>)</span></div>
<div class="a" style="left:1006px;top:787px;width:96px;height:34px;background:#f3f3f3;border-radius:4px"></div>
<div class="a" style="left:1007px;top:788px;width:94px;height:32px;background:#fdfdfd;border:1px solid #cfcfcf;border-bottom-color:#b5b5b5;border-radius:4px"></div>
<div class="t" style="left:1026px;top:797px;font-size:16px;color:#111;">删除<span class="lt">(<u>D</u>)</span></div>
<div class="a" style="left:1100px;top:881px;width:92px;height:27px;background:#fdfdfd;border:1.5px solid #0b67c2;border-radius:4px"></div>
<div class="t" style="left:1121px;top:887px;font-size:16px;color:#111;">关闭<span class="lt">(<u>C</u>)</span></div>
</body></html>
